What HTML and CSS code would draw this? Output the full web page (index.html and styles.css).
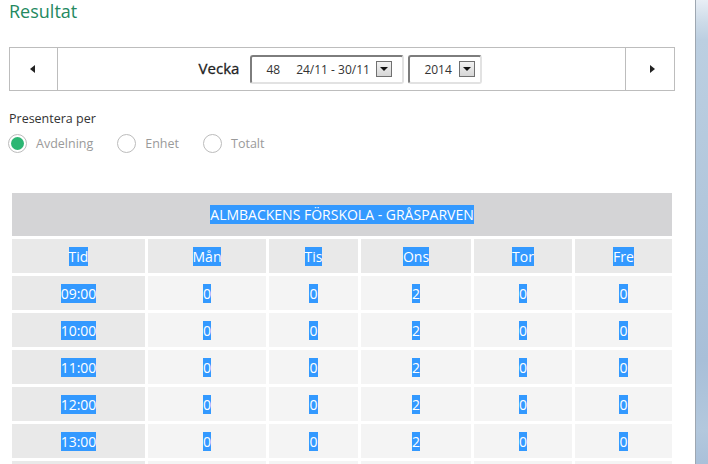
FILE: index.html
```html
<!DOCTYPE html>
<html lang="sv">
<head>
<meta charset="utf-8">
<title>Resultat</title>
<link rel="stylesheet" href="styles.css">
</head>
<body>
<div class="page">
  <div class="main">
    <h1 class="title">Resultat</h1>
    <div class="weeknav">
      <div class="navbtn"><span class="tri tri-left"></span></div>
      <div class="navcenter">
        <span class="vecka">Vecka</span>
        <div class="select sel-week"><span class="num">48</span><span class="range">24/11 - 30/11</span><span class="ddbtn"><span class="ddtri"></span></span></div>
        <div class="select sel-year"><span class="num">2014</span><span class="ddbtn"><span class="ddtri"></span></span></div>
      </div>
      <div class="navbtn"><span class="tri tri-right"></span></div>
    </div>
    <div class="present">
      <div class="plabel">Presentera per</div>
      <div class="radios">
        <label class="radio"><span class="circle on"></span><span class="rlabel">Avdelning</span></label>
        <label class="radio"><span class="circle"></span><span class="rlabel">Enhet</span></label>
        <label class="radio"><span class="circle"></span><span class="rlabel">Totalt</span></label>
      </div>
    </div>
    <table class="grid">
      <colgroup>
        <col class="c-tid"><col class="c-man"><col class="c-tis"><col class="c-ons"><col class="c-tor"><col class="c-fre">
      </colgroup>
      <tr><th colspan="6" class="titlecell"><span class="sel">ALMBACKENS FÖRSKOLA - GRÅSPARVEN</span></th></tr>
      <tr class="head"><td class="tid"><span class="sel">Tid</span></td><td class="tid"><span class="sel">Mån</span></td><td class="tid"><span class="sel">Tis</span></td><td class="tid"><span class="sel">Ons</span></td><td class="tid"><span class="sel">Tor</span></td><td class="tid"><span class="sel">Fre</span></td></tr>
      <tr><td class="tid"><span class="sel">09:00</span></td><td><span class="sel">0</span></td><td><span class="sel">0</span></td><td><span class="sel">2</span></td><td><span class="sel">0</span></td><td><span class="sel">0</span></td></tr>
      <tr><td class="tid"><span class="sel">10:00</span></td><td><span class="sel">0</span></td><td><span class="sel">0</span></td><td><span class="sel">2</span></td><td><span class="sel">0</span></td><td><span class="sel">0</span></td></tr>
      <tr><td class="tid"><span class="sel">11:00</span></td><td><span class="sel">0</span></td><td><span class="sel">0</span></td><td><span class="sel">2</span></td><td><span class="sel">0</span></td><td><span class="sel">0</span></td></tr>
      <tr><td class="tid"><span class="sel">12:00</span></td><td><span class="sel">0</span></td><td><span class="sel">0</span></td><td><span class="sel">2</span></td><td><span class="sel">0</span></td><td><span class="sel">0</span></td></tr>
      <tr><td class="tid"><span class="sel">13:00</span></td><td><span class="sel">0</span></td><td><span class="sel">0</span></td><td><span class="sel">2</span></td><td><span class="sel">0</span></td><td><span class="sel">0</span></td></tr>
      <tr><td class="tid"><span class="sel">14:00</span></td><td><span class="sel">0</span></td><td><span class="sel">0</span></td><td><span class="sel">2</span></td><td><span class="sel">0</span></td><td><span class="sel">0</span></td></tr>
    </table>
  </div>
  <div class="frame"></div>
</div>
</body>
</html>
```

FILE: styles.css
```css
html, body {
  margin: 0;
  padding: 0;
  background: #fff;
  font-family: "Open Sans", "Liberation Sans", sans-serif;
  color: #333;
  overflow: hidden;
}
.page {
  display: flex;
  width: 708px;
  height: 464px;
  overflow: hidden;
}
.main {
  width: 695px;
  flex: none;
  padding-left: 9px;
  box-sizing: border-box;
}
.frame {
  flex: none;
  width: 13px;
  height: 464px;
  border-left: 1px solid #9ea7b1;
  box-sizing: border-box;
  background: linear-gradient(to bottom, #e8eef5 0px, #cddbe8 22px, #bccfe1 40px, #b2c7dc 200px, #a8bfd8 360px, #b3c8dd 430px, #a9c0d9 464px);
}
.title {
  margin: 0;
  padding-top: 1px;
  font-size: 18px;
  line-height: 20px;
  font-weight: normal;
  color: #24895f;
}
.weeknav {
  margin-top: 26px;
  width: 666px;
  height: 44px;
  box-sizing: border-box;
  border: 1px solid #bdbdbd;
  display: flex;
}
.navbtn {
  width: 47px;
  flex: none;
  display: flex;
  align-items: center;
  justify-content: center;
}
.navbtn:first-child { border-right: 1px solid #bdbdbd; }
.navbtn:last-child { border-left: 1px solid #bdbdbd; width: 48px; }
.tri {
  width: 0;
  height: 0;
  border-top: 4px solid transparent;
  border-bottom: 4px solid transparent;
}
.tri-left { border-right: 5px solid #222; margin-left: -2px; }
.tri-right { border-left: 5px solid #222; margin-left: 4px; }
.navcenter {
  flex: 1;
  display: flex;
  align-items: center;
  justify-content: center;
  padding-right: 2px;
  white-space: nowrap;
}
.vecka {
  font-size: 15px;
  font-weight: normal;
  color: #222;
  margin-right: 11px;
  margin-top: -3px;
  -webkit-text-stroke: 0.3px #222;
}
.select {
  height: 29px;
  box-sizing: border-box;
  border: 2px solid;
  border-color: #7d7d7d #e2e2e2 #e2e2e2 #7d7d7d;
  border-radius: 3px;
  display: flex;
  align-items: center;
  padding-left: 14px;
  padding-right: 10px;
  font-size: 12px;
  color: #333;
  white-space: nowrap;
  flex: none;
}
.sel-week { width: 154px; margin-right: 4px; }
.sel-year { width: 74px; }
.sel-week .num { margin-right: 16px; }
.range { margin-right: 4px; white-space: nowrap; flex: none; }
.sel-year .num { margin-right: 7px; }
.ddbtn {
  width: 16px;
  height: 16px;
  flex: none;
  box-sizing: border-box;
  border: 1px solid #707070;
  background: linear-gradient(to bottom, #f2f2f2, #d6d6d6);
  display: flex;
  align-items: center;
  justify-content: center;
  margin-left: auto;
}
.ddtri {
  width: 0;
  height: 0;
  border-left: 4px solid transparent;
  border-right: 4px solid transparent;
  border-top: 4px solid #111;
}
.present {
  margin-top: 19px;
}
.plabel {
  font-size: 12.5px;
  line-height: 17px;
  color: #333;
}
.radios {
  display: flex;
  align-items: center;
  margin-top: 7px;
  margin-left: -1px;
}
.radio {
  display: flex;
  align-items: center;
  margin-right: 24px;
}
.circle {
  width: 19px;
  height: 19px;
  box-sizing: border-box;
  border-radius: 50%;
  border: 1px solid #bcbcbc;
  background: #fff;
  margin-right: 9px;
  display: flex;
  align-items: center;
  justify-content: center;
}
.circle.on::after {
  content: "";
  width: 13px;
  height: 13px;
  border-radius: 50%;
  background: #2cb673;
}
.rlabel {
  font-size: 12.5px;
  color: #9a9a9a;
}
.grid {
  margin-top: 37px;
  margin-left: 0;
  width: 666px;
  table-layout: fixed;
  border-collapse: separate;
  border-spacing: 3px;
  font-size: 14px;
}
.c-tid { width: 133px; }
.c-man { width: 118px; }
.c-tis { width: 89px; }
.c-ons { width: 110px; }
.c-tor { width: 98px; }
.c-fre { width: 97px; }
.grid td, .grid th {
  padding: 0;
  text-align: center;
  vertical-align: middle;
  height: 34px;
  background: #f4f4f4;
  font-weight: normal;
  line-height: 19px;
}
.grid td.tid { background: #e9e9e9; }
.grid th.titlecell {
  height: 43px;
  background: #d4d4d6;
}
.sel {
  background: #3399ff;
  color: #fff;
  display: inline-block;
  line-height: 19px;
}
```
